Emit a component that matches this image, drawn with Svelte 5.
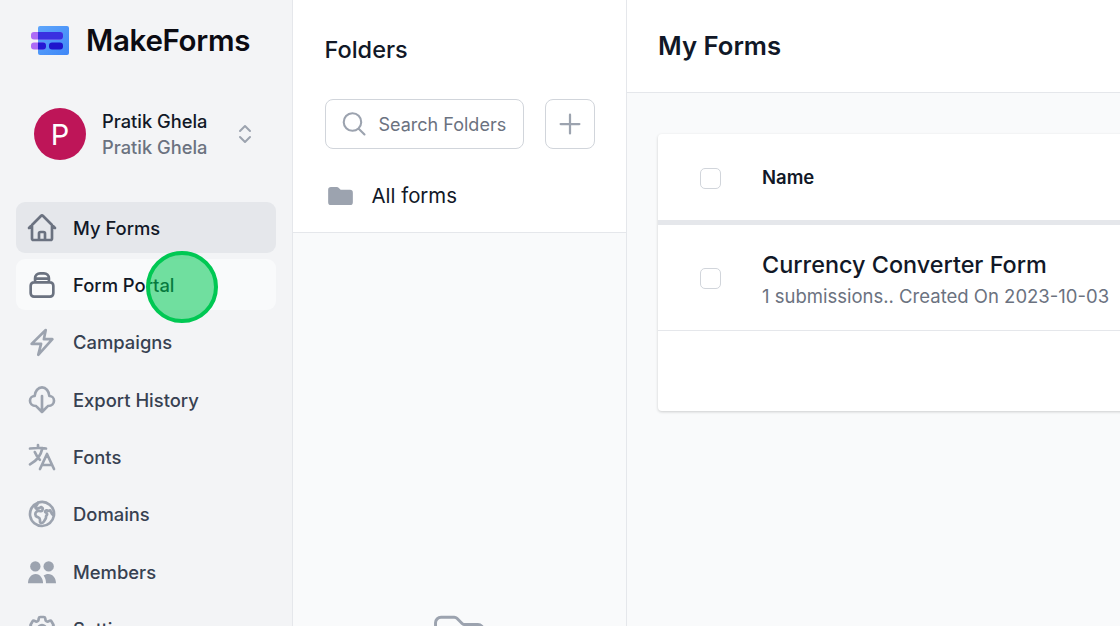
<script>
  const nav = [
    { label: 'My Forms', cls: 'active', icon: 'home' },
    { label: 'Form Portal', cls: 'hover', icon: 'portal' },
    { label: 'Campaigns', icon: 'bolt' },
    { label: 'Export History', icon: 'cloud' },
    { label: 'Fonts', icon: 'lang' },
    { label: 'Domains', icon: 'globe' },
    { label: 'Members', icon: 'users' },
    { label: 'Settings', icon: 'cog' }
  ];
  const paths = {
    home: 'M2.25 12l8.954-8.955c.44-.439 1.152-.439 1.591 0L21.75 12M4.5 9.75v10.125c0 .621.504 1.125 1.125 1.125H9.75v-4.875c0-.621.504-1.125 1.125-1.125h2.25c.621 0 1.125.504 1.125 1.125V21h4.125c.621 0 1.125-.504 1.125-1.125V9.75M8.25 21h7.5',
    portal: 'M6.800 10V7a3.750 3.750 0 0 1 3.750-3.750h2.900A3.750 3.750 0 0 1 17.200 7v3M7 7.200h10M6 10h12a2.500 2.500 0 0 1 2.500 2.500v5.750a2.500 2.500 0 0 1-2.500 2.500H6a2.500 2.500 0 0 1-2.500-2.500V12.500A2.500 2.500 0 0 1 6 10z',
    bolt: 'M14.800 3 4.200 13.400h7.100L9.200 21.600l10.600-11.700h-6.400z',
    cloud: 'M12 9v12m-4-4 4 4 4-4M7.500 16.500C4.500 16.500 3 14.500 3 12.500S4.500 9 6.500 9C6.800 5.500 9 2.500 12 2.500s5.200 3 5.500 6.500c2 0 3.500 1.500 3.500 3.500s-1.500 4-4.500 4',
    lang: 'M10.5 21l5.25-11.25L21 21m-9-3h7.5M3 5.621a48.474 48.474 0 016-.371m0 0c1.12 0 2.233.038 3.334.114M9 5.25V3m3.334 2.364C11.176 10.658 7.69 15.08 3 17.502m9.334-12.138c.896.061 1.785.147 2.666.257m-4.589 8.495a18.023 18.023 0 01-3.827-5.802',
    globe: 'M20.893 13.393l-1.135-1.135a2.252 2.252 0 01-.421-.585l-1.08-2.16a.414.414 0 00-.663-.107.827.827 0 01-.812.21l-1.273-.363a.89.89 0 00-.738 1.595l.587.39c.59.395.674 1.23.172 1.732l-.2.2c-.212.212-.33.498-.33.796v.41c0 .409-.11.809-.32 1.158l-1.315 2.191a2.11 2.11 0 01-1.81 1.025 1.055 1.055 0 01-1.055-1.055v-1.172c0-.92-.56-1.747-1.414-2.089l-.655-.261a2.25 2.25 0 01-1.383-2.46l.007-.042a2.25 2.25 0 01.29-.787l.09-.15a2.25 2.25 0 012.37-1.048l1.178.236a1.125 1.125 0 001.302-.795l.208-.73a1.125 1.125 0 00-.578-1.315l-.665-.332-.091.091a2.25 2.25 0 01-1.591.659h-.18c-.249 0-.487.1-.662.274a.931.931 0 01-1.458-1.137l1.411-2.353a2.25 2.25 0 00.286-.76m11.928 9.869A9 9 0 008.965 3.525m11.928 9.868A9 9 0 118.965 3.525',
    cog: 'M9.594 3.94c.09-.542.56-.94 1.11-.94h2.593c.55 0 1.02.398 1.11.94l.213 1.281c.063.374.313.686.645.87.074.04.147.083.22.127.324.196.72.257 1.075.124l1.217-.456a1.125 1.125 0 011.37.49l1.296 2.247a1.125 1.125 0 01-.26 1.431l-1.003.827c-.293.24-.438.613-.431.992a6.759 6.759 0 010 .255c-.007.378.138.75.43.99l1.005.828c.424.35.534.954.26 1.43l-1.298 2.247a1.125 1.125 0 01-1.369.491l-1.217-.456c-.355-.133-.75-.072-1.076.124a6.57 6.57 0 01-.22.128c-.331.183-.581.495-.644.869l-.213 1.28c-.09.543-.56.941-1.11.941h-2.594c-.55 0-1.02-.398-1.11-.94l-.213-1.281c-.062-.374-.312-.686-.644-.87a6.52 6.52 0 01-.22-.127c-.325-.196-.72-.257-1.076-.124l-1.217.456a1.125 1.125 0 01-1.369-.49l-1.297-2.247a1.125 1.125 0 01.26-1.431l1.004-.827c.292-.24.437-.613.43-.992a6.932 6.932 0 010-.255c.007-.378-.138-.75-.43-.99l-1.004-.828a1.125 1.125 0 01-.26-1.43l1.297-2.247a1.125 1.125 0 011.37-.491l1.216.456c.356.133.751.072 1.076-.124.072-.044.146-.087.22-.128.332-.183.582-.495.644-.869l.214-1.281zM15 12a3 3 0 11-6 0 3 3 0 016 0z'
  };
</script>

<div class="page">
  <aside class="side">
    <div class="brand">
      <svg class="logo" viewBox="0 0 38 30" aria-hidden="true">
        <defs>
          <linearGradient id="lg" x1="0" y1="0" x2="1" y2="1"><stop offset="0" stop-color="#5ea6fb" /><stop offset="1" stop-color="#3f87f7" /></linearGradient>
        </defs>
        <rect x="7" y="1" width="31" height="29" rx="2" fill="url(#lg)" />
        <rect x="0" y="7" width="32" height="7.500" rx="3" fill="#ad6cf6" />
        <rect x="0" y="17.500" width="15" height="7" rx="3" fill="#ad6cf6" />
        <path d="M7 7h22a3 3 0 0 1 3 3v1.500a3 3 0 0 1-3 3H7z" fill="#3a30e0" />
        <path d="M7 17.500h5a3 3 0 0 1 3 3v1a3 3 0 0 1-3 3H7z" fill="#2418d4" />
        <rect x="18" y="17.500" width="14" height="7" rx="3" fill="#1f14cc" />
      </svg>
      <span class="brand-name">MakeForms</span>
    </div>
    <div class="user">
      <div class="avatar">P</div>
      <div class="who">
        <div class="who-a">Pratik Ghela</div>
        <div class="who-b">Pratik Ghela</div>
      </div>
      <svg class="updown" viewBox="0 0 14 20" aria-hidden="true"><path d="M2 7l5-5 5 5M2 13l5 5 5-5" /></svg>
    </div>
    <nav class="nav">
      {#each nav as item}
        <div class="item {item.cls ?? ''}">
          {#if item.icon === 'users'}
            <svg class="ico" viewBox="0 0 24 24" aria-hidden="true"><g class="solid"><circle cx="7" cy="7.800" r="3.900" /><circle cx="17" cy="7.800" r="3.900" /><path d="M1.500 20.500c0-4 2.500-7 5.700-7 1.800 0 3.200.9 4.200 2.400.9 1.300 1.400 2.900 1.400 4.600z" /><path d="M15 20.500c0-2.300-.6-4.200-1.800-5.800.9-.8 2.200-1.200 3.500-1.200 3.300 0 5.800 3 5.800 7z" /></g></svg>
          {:else}
            <svg class="ico" viewBox="0 0 24 24" aria-hidden="true"><path class="line" d={paths[item.icon]} /></svg>
          {/if}
          <span>{item.label}</span>
        </div>
      {/each}
    </nav>
  </aside>

  <section class="folders">
    <div class="folders-top">
      <h2>Folders</h2>
      <div class="tools">
        <div class="search">
          <svg viewBox="0 0 24 24" aria-hidden="true"><path d="M21 21l-5.200-5.200M15.800 15.800A7.500 7.500 0 1 0 5.200 5.200a7.500 7.500 0 0 0 10.600 10.600z" /></svg>
          <span>Search Folders</span>
        </div>
        <div class="add"><svg viewBox="0 0 24 24" aria-hidden="true"><path d="M12 4.500v15M4.500 12h15" /></svg></div>
      </div>
      <div class="all">
        <svg viewBox="0 0 26 20" aria-hidden="true"><path d="M0 3a3 3 0 0 1 3-3h6c1 0 1.700.4 2.300 1l1.500 1.500c.4.400.8.500 1.300.5H23a3 3 0 0 1 3 3v10a3 3 0 0 1-3 3H3a3 3 0 0 1-3-3z" /></svg>
        <span>All forms</span>
      </div>
    </div>
    <div class="folders-empty">
      <svg viewBox="0 0 24 24" aria-hidden="true"><path d="M2.250 18V6A2.250 2.250 0 0 1 4.500 3.750h5.379a1.500 1.500 0 0 1 1.060.44l2.122 2.120a1.500 1.500 0 0 0 1.060.44H19.500A2.250 2.250 0 0 1 21.750 9v9a2.250 2.250 0 0 1-2.250 2.250h-15A2.250 2.250 0 0 1 2.250 18z" /></svg>
    </div>
  </section>

  <main class="main">
    <header class="head"><h1>My Forms</h1></header>
    <div class="body">
      <div class="card">
        <div class="row-head">
          <div class="check"></div>
          <strong>Name</strong>
        </div>
        <div class="row">
          <div class="check"></div>
          <div class="row-text">
            <div class="title">Currency Converter Form</div>
            <div class="sub">1 submissions.. Created On 2023-10-03</div>
          </div>
        </div>
        <div class="foot"></div>
      </div>
    </div>
  </main>

  <div class="pointer"></div>
</div>

<style>
  :global(body) { margin: 0; background: #fff; }
  .page {
    position: relative;
    display: flex;
    width: 1120px;
    height: 626px;
    overflow: hidden;
    font-family: Inter, "Liberation Sans", sans-serif;
    color: #111827;
  }
  .side {
    flex: 0 0 293px;
    box-sizing: border-box;
    padding: 25px 16px 0;
    background: #f3f4f6;
    border-right: 1px solid #e5e7eb;
  }
  .brand { display: flex; align-items: center; gap: 17px; padding-left: 15px; height: 30px; }
  .logo { width: 38px; height: 30px; flex: none; }
  .brand-name { font-size: 29.500px; font-weight: 600; color: #0b0b12; letter-spacing: -0.300px; }
  .user { display: flex; align-items: center; margin-top: 53px; padding-left: 18px; height: 52px; }
  .avatar {
    width: 52px; height: 52px; border-radius: 50%; background: #be1558; color: #fff;
    display: flex; align-items: center; justify-content: center; font-size: 29px; flex: none;
  }
  .who { margin-left: 16px; font-size: 18.300px; font-weight: 450; line-height: 26px; width: 136px; flex: none; }
  .who-a { color: #111827; }
  .who-b { color: #6b7280; }
  .updown { width: 14px; height: 20px; flex: none; }
  .updown path { fill: none; stroke: #9ca3af; stroke-width: 2; stroke-linecap: round; stroke-linejoin: round; }
  .nav { display: flex; flex-direction: column; gap: 6.400px; margin-top: 42px; }
  .item {
    display: flex; align-items: center; gap: 15px; height: 51px; flex: none; padding-left: 10px;
    border-radius: 9px; font-size: 18.400px; font-weight: 450; color: #374151;
  }
  .item.active { background: #e5e7eb; color: #111827; }
  .item.hover { background: #f9fafb; color: #111827; }
  .ico { width: 32px; height: 32px; flex: none; }
  .line { fill: none; stroke: #9ca3af; stroke-width: 2; stroke-linecap: round; stroke-linejoin: round; }
  .solid { fill: #9ca3af; }
  .active .line, .hover .line { stroke: #6b7280; }

  .folders {
    flex: 0 0 334px; box-sizing: border-box; display: flex; flex-direction: column;
    background: #f9fafb; border-right: 1px solid #e5e7eb;
  }
  .folders-top { flex: none; background: #fff; border-bottom: 1px solid #e5e7eb; padding: 35px 0 0 31.500px; height: 233px; box-sizing: border-box; }
  h2 { margin: 0; font-size: 23.500px; font-weight: 450; line-height: 30px; color: #111827; }
  .tools { display: flex; gap: 21px; margin-top: 34px; }
  .search, .add {
    box-sizing: border-box; height: 50px; border: 1.500px solid #d1d5db; border-radius: 8px; background: #fff;
    display: flex; align-items: center;
  }
  .search { width: 199.500px; padding-left: 14px; gap: 11px; font-size: 18px; color: #6b7280; overflow: hidden; white-space: nowrap; }
  .search svg { width: 28px; height: 28px; flex: none; }
  .search path { fill: none; stroke: #9ca3af; stroke-width: 1.800; stroke-linecap: round; }
  .add { width: 49.500px; justify-content: center; }
  .add svg { width: 30px; height: 30px; }
  .add path { fill: none; stroke: #9ca3af; stroke-width: 1.800; stroke-linecap: round; }
  .all { display: flex; align-items: center; gap: 19px; margin-top: 28px; padding-left: 3px; font-size: 20.400px; line-height: 38px; color: #111827; }
  .all svg { width: 25px; height: 19px; flex: none; }
  .all path { fill: #9ca3af; }
  .folders-empty { display: flex; justify-content: center; padding-top: 375px; }
  .folders-empty svg { width: 59px; height: 59px; flex: none; }
  .folders-empty path { fill: none; stroke: #9ca3af; stroke-width: 1.200; stroke-linejoin: round; }

  .main { flex: 1; min-width: 0; background: #f9fafb; }
  .head { height: 93px; box-sizing: border-box; background: #fff; border-bottom: 1px solid #e5e7eb; padding: 27px 0 0 31px; }
  h1 { margin: 0; font-size: 25.700px; font-weight: 600; line-height: 38px; color: #111827; }
  .body { padding: 41px 0 0 31px; }
  .card {
    width: 600px; background: #fff; border-radius: 4px 0 0 4px;
    box-shadow: 0 1px 3px rgba(0,0,0,.18);
  }
  .row-head { display: flex; align-items: center; box-sizing: border-box; height: 91px; padding: 2px 0 0 42px; border-bottom: 5px solid #e5e7eb; font-size: 18.500px; }
  .row-head strong { font-weight: 600; margin-left: 41px; margin-top: -2px; }
  .check { box-sizing: border-box; width: 21px; height: 21px; border: 1.500px solid #d1d5db; border-radius: 5px; background: #fff; flex: none; }
  .row { display: flex; align-items: center; height: 106px; box-sizing: border-box; border-bottom: 1px solid #e5e7eb; padding: 2px 0 0 42px; }
  .row-text { margin-left: 41px; }
  .title { font-size: 23.400px; font-weight: 450; line-height: 34px; color: #111827; }
  .sub { font-size: 18.500px; line-height: 28px; color: #6b7280; white-space: nowrap; }
  .foot { height: 80px; }

  .pointer {
    position: absolute; left: 146px; top: 251px; width: 72px; height: 72px; box-sizing: border-box;
    border-radius: 50%; border: 4px solid #00c853; background: rgba(0, 200, 83, .55);
  }
</style>
